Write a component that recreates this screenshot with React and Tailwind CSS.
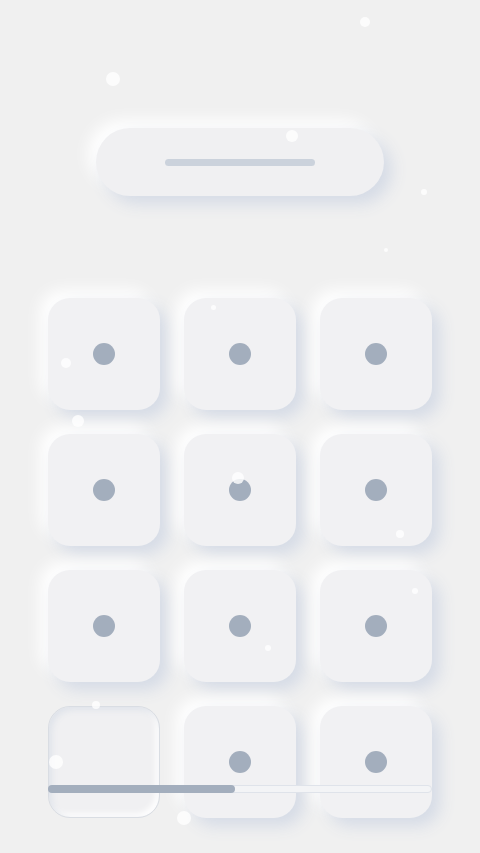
import React from 'react';

const particles = [
  { x: 113, y: 79, s: 14 },
  { x: 365, y: 22, s: 10 },
  { x: 292, y: 136, s: 12 },
  { x: 424, y: 192, s: 6 },
  { x: 386, y: 250, s: 4 },
  { x: 213, y: 307, s: 5 },
  { x: 66, y: 363, s: 10 },
  { x: 78, y: 421, s: 12 },
  { x: 238, y: 478, s: 12 },
  { x: 400, y: 534, s: 8 },
  { x: 415, y: 591, s: 6 },
  { x: 268, y: 648, s: 6 },
  { x: 96, y: 705, s: 8 },
  { x: 56, y: 762, s: 14 },
  { x: 184, y: 818, s: 14 },
];

const Key = ({ empty }) =>
  empty ? (
    <div className="h-[112px] w-[112px] rounded-[22px] border border-[#d9dde3] bg-[#f0f0f2] shadow-[inset_3px_3px_6px_#dfe3ea,inset_-3px_-3px_6px_#ffffff]" />
  ) : (
    <div className="flex h-[112px] w-[112px] items-center justify-center rounded-[22px] bg-[#f1f1f3] shadow-[8px_8px_16px_#d5dbe6,-8px_-8px_16px_#ffffff]">
      <div className="h-[22px] w-[22px] rounded-full bg-[#a3aebd]" />
    </div>
  );

export default function App() {
  const keys = Array.from({ length: 12 }, (_, i) => i);
  return (
    <div className="relative h-[853px] w-[480px] overflow-hidden bg-[#f0f0f0] font-['Inter',sans-serif]">
      <div className="flex flex-col items-center pt-[128px]">
        <div className="flex h-[68px] w-[288px] items-center justify-center rounded-full bg-[#f0f0f2] shadow-[8px_8px_16px_#d5dbe6,-8px_-8px_16px_#ffffff]">
          <div className="h-[7px] w-[150px] rounded-full bg-[#cbd2dc]" />
        </div>

        <div className="relative mt-[102px] grid grid-cols-3 gap-6">
          {keys.map((i) => (
            <Key key={i} empty={i === 9} />
          ))}
          <div className="absolute left-0 right-0 top-[487px] h-[8px] rounded-full border border-[#dfe3ea] bg-[#f3f4f6]">
            <div className="-m-px h-[8px] w-[187px] rounded-full bg-[#a3aebd]" />
          </div>
        </div>
      </div>

      {particles.map((p, i) => (
        <div
          key={i}
          className="absolute rounded-full bg-white/80"
          style={{ left: p.x - p.s / 2, top: p.y - p.s / 2, width: p.s, height: p.s }}
        />
      ))}
    </div>
  );
}
